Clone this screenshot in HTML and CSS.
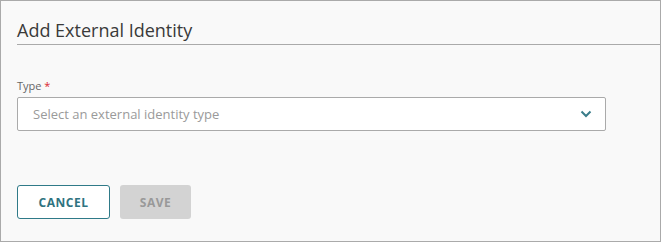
FILE: index.html
```html
<!DOCTYPE html>
<html lang="en">
<head>
  <meta charset="UTF-8">
  <title>Add External Identity</title>
  <link rel="stylesheet" href="styles.css">
</head>
<body>
  <div class="dialog">
    <div class="dialog-title">Add External Identity</div>
    <div class="field">
      <label class="field-label">Type <span class="req">*</span></label>
      <div class="select-box">
        <span class="placeholder">Select an external identity type</span>
        <svg class="chevron" width="12" height="8" viewBox="0 0 12 8">
          <path d="M1.5 1.5 L6 6 L10.5 1.5" fill="none" stroke="#3a7d8a" stroke-width="2"/>
        </svg>
      </div>
    </div>
    <div class="actions">
      <button class="btn btn-cancel">CANCEL</button>
      <button class="btn btn-save" disabled>SAVE</button>
    </div>
  </div>
</body>
</html>
```

FILE: styles.css
```css
body {
  margin: 0;
  font-family: 'Open Sans', Arial, sans-serif;
  background: #fff;
}
.dialog {
  width: 643px;
  height: 240px;
  border: 1px solid #aaa;
  background: #f9f9f9;
  padding: 0 0 0 16px;
}
.dialog-title {
  font-size: 18px;
  color: #3a3a3a;
  padding-top: 16px;
  height: 27px;
  line-height: 27px;
  border-bottom: 1px solid #aaa;
}
.field {
  margin-top: 33px;
}
.field-label {
  display: block;
  font-size: 11px;
  color: #666;
  line-height: 16px;
  margin-bottom: 3px;
}
.req {
  color: #d9262e;
}
.select-box {
  width: 589px;
  height: 34px;
  border: 1px solid #aaa;
  border-radius: 2px;
  background: #fff;
  display: flex;
  align-items: center;
  justify-content: space-between;
  padding: 0 13px 0 15px;
  box-sizing: border-box;
}
.placeholder {
  font-size: 13px;
  color: #9a9a9a;
}
.actions {
  display: flex;
  gap: 10px;
  margin-top: 54px;
}
.btn {
  height: 34px;
  font-family: inherit;
  font-size: 12px;
  font-weight: bold;
  letter-spacing: 0.5px;
  border-radius: 3px;
  padding: 0;
}
.btn-cancel {
  width: 93px;
  border: 1px solid #2f7a88;
  background: #fff;
  color: #2f7380;
}
.btn-save {
  width: 71px;
  border: none;
  background: #d3d3d3;
  color: #999;
}
```
